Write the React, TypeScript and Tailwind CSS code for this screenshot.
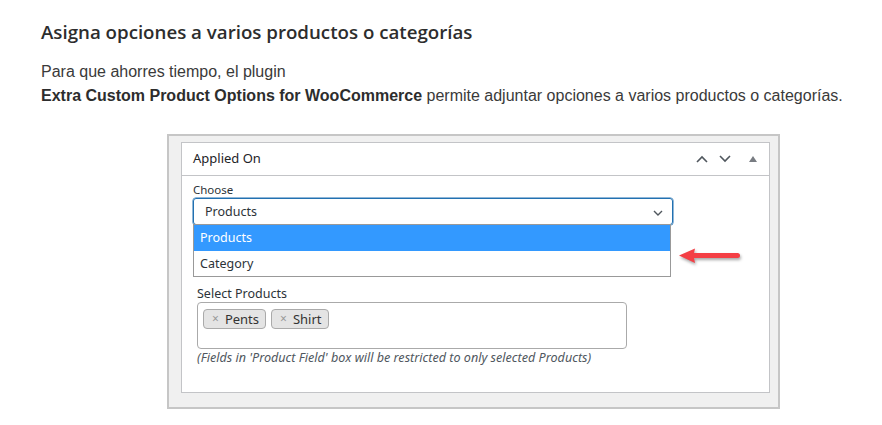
import React from 'react';

const panelFont = { fontFamily: '"Noto Sans", "Open Sans", sans-serif' };

function Chevron({ up, className }: { up?: boolean; className?: string }) {
  return (
    <svg width="12" height="8" viewBox="0 0 12 8" className={className} aria-hidden="true">
      <path
        d={up ? 'M1 7 L6 2 L11 7' : 'M1 1 L6 6 L11 1'}
        fill="none"
        stroke="currentColor"
        strokeWidth="1.6"
      />
    </svg>
  );
}

function Tag({ label }: { label: string }) {
  return (
    <span className="flex h-[20px] items-center gap-[6px] rounded-[4px] border border-[#aaaaaa] bg-[#e4e4e4] pl-[8px] pr-[6px] text-[13px] text-[#333]">
      <span className="text-[12px] leading-none text-[#999]">×</span>
      <span className="leading-none">{label}</span>
    </span>
  );
}

export default function App() {
  return (
    <div className="h-[425px] w-[882px] overflow-hidden bg-white">
      <div className="pl-[41px] pt-[20px]">
        <h2
          className="text-[18.7px] font-semibold leading-[24px] text-[#2d2d2d]"
          style={{ fontFamily: '"Open Sans", sans-serif' }}
        >
          Asigna opciones a varios productos o categorías
        </h2>
        <p
          className="mt-[16px] text-[16px] leading-[24px] text-[#3a3a3a]"
          style={{ fontFamily: '"Liberation Sans", Arial, sans-serif' }}
        >
          Para que ahorres tiempo, el plugin
          <br />
          <strong className="font-bold text-[#2d2d2d]">Extra Custom Product Options for WooCommerce</strong> permite
          adjuntar opciones a varios productos o categorías.
        </p>
      </div>

      {/* screenshot frame */}
      <div className="ml-[167px] mt-[26px] h-[275px] w-[613px] border-2 border-[#c6c6c6] bg-[#f0f0f0] pl-[12px] pr-[8px] pt-[6px]">
        <div className="relative h-[251px] border border-[#c3c4c7] bg-white" style={panelFont}>
          <div className="flex h-[33px] items-center justify-between border-b border-[#c3c4c7] pl-[11px] pr-[12px]">
            <span className="text-[13px] text-[#1d2327]">Applied On</span>
            <div className="flex items-center text-[#50575e]">
              <Chevron up className="mr-[11px]" />
              <Chevron className="mr-[18px]" />
              <svg width="8" height="6" viewBox="0 0 8 6" className="text-[#787c82]" aria-hidden="true">
                <path d="M0 6 L4 0 L8 6 Z" fill="currentColor" />
              </svg>
            </div>
          </div>

          <div className="pl-[11px] pt-[6px]">
            <div className="text-[11.5px] leading-[16px] text-[#2c3338]">Choose</div>
            <div className="relative w-[480px]">
              <div className="flex h-[27px] items-center justify-between rounded-[3px] border border-[#2271b1] pl-[11px] pr-[9px] pt-[2px] shadow-[0_0_0_0.5px_#2271b1]">
                <span className="text-[12.5px] text-[#2c3338]">Products</span>
                <svg width="10" height="6" viewBox="0 0 10 6" className="text-[#50575e]" aria-hidden="true">
                  <path d="M1 1 L5 5 L9 1" fill="none" stroke="currentColor" strokeWidth="1.4" />
                </svg>
              </div>
              <ul className="absolute left-0 top-[26px] w-[478px] border border-[#999] bg-white text-[12.5px]">
                <li className="flex h-[26px] items-center bg-[#3399ff] pl-[6px] pt-[1px] text-white">Products</li>
                <li className="flex h-[25px] items-center pl-[6px] pt-[1px] text-[#2c3338]">Category</li>
              </ul>
            </div>

            <div className="ml-[4px] mt-[61px]">
              <div className="text-[12.5px] leading-[16px] text-[#2c3338]">Select Products</div>
              <div className="flex h-[47px] w-[430px] items-start gap-[5px] rounded-[4px] border border-[#aaaaaa] pl-[5px] pt-[6px]">
                <Tag label="Pents" />
                <Tag label="Shirt" />
              </div>
              <p className="mt-[1px] text-[12.6px] italic leading-[16px] text-[#50575e]">
                (Fields in 'Product Field' box will be restricted to only selected Products)
              </p>
            </div>
          </div>

          {/* annotation arrow */}
          <svg
            width="68"
            height="20"
            viewBox="0 0 68 20"
            className="absolute left-[496px] top-[104px] drop-shadow-[1px_2px_1.5px_rgba(0,0,0,0.35)]"
            aria-hidden="true"
          >
            <path d="M1 8.5 L17 1.5 L15.5 8.5 L17 16 Z" fill="#f43f45" />
            <rect x="14" y="6" width="48" height="5" rx="2.5" fill="#f43f45" />
          </svg>
        </div>
      </div>
    </div>
  );
}
